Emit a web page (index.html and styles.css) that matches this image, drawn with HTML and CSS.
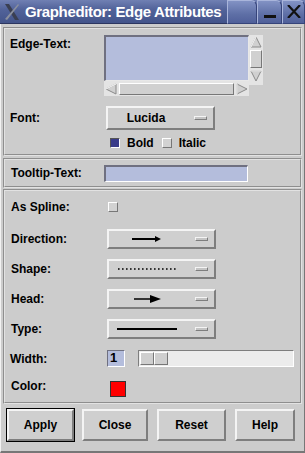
FILE: index.html
```html
<!DOCTYPE html>
<html>
<head>
<meta charset="utf-8">
<link rel="stylesheet" href="styles.css">
</head>
<body>
<div class="win">
  <div class="titlebar">
    <svg class="xlogo" width="18" height="18" viewBox="0 0 18 18">
      <path d="M2 1 L6 1 L16 17 L12 17 Z" fill="#3a3f52"/>
      <path d="M15 1 L16 2 L4 17 L2 16 Z" fill="#8a8f9e"/>
    </svg>
    <span class="title">Grapheditor: Edge Attributes</span>
    <div class="tbtns">
      <div class="tbtn wide"></div>
      <div class="tbtn"><span class="minbar"></span></div>
      <div class="tbtn">
        <svg width="14" height="13" viewBox="0 0 14 13"><path d="M1 0 L13 13 M13 0 L1 13" stroke="#111" stroke-width="2.2"/></svg>
      </div>
    </div>
  </div>
  <div class="body">
    <div class="frame f1">
      <div class="row top">
        <div class="lbl l1 tl">Edge-Text:</div>
        <div class="textbox">
          <div class="ta"></div>
          <div class="vscroll">
            <svg class="arr" width="12" height="12" viewBox="0 0 12 12"><path d="M6 1 L11 11 L1 11 Z" fill="#d0d0d0" stroke="#8a8a8a"/><path d="M6 1 L1 11" stroke="#fff"/></svg>
            <div class="vthumb"></div>
            <svg class="arr" width="12" height="12" viewBox="0 0 12 12"><path d="M6 11 L11 1 L1 1 Z" fill="#d0d0d0" stroke="#8a8a8a"/><path d="M1 1 L11 1" stroke="#fff"/></svg>
          </div>
          <div class="hscroll">
            <svg class="arr" width="12" height="12" viewBox="0 0 12 12"><path d="M1 6 L11 1 L11 11 Z" fill="#d0d0d0" stroke="#8a8a8a"/><path d="M1 6 L11 1" stroke="#fff"/></svg>
            <div class="hthumb"></div>
            <svg class="arr" width="12" height="12" viewBox="0 0 12 12"><path d="M11 6 L1 1 L1 11 Z" fill="#d0d0d0" stroke="#8a8a8a"/><path d="M1 1 L1 11" stroke="#fff"/></svg>
          </div>
        </div>
      </div>
      <div class="row font-row">
        <div class="lbl l1">Font:</div>
        <div class="opt tall"><span class="val">Lucida</span><span class="ind"></span></div>
      </div>
      <div class="row checks">
        <span class="cb on"></span><span class="cbl">Bold</span>
        <span class="cb"></span><span class="cbl">Italic</span>
      </div>
    </div>

    <div class="frame f2">
      <div class="row center">
        <div class="lbl l2">Tooltip-Text:</div>
        <div class="tip"></div>
      </div>
    </div>

    <div class="frame f3">
      <div class="row spline">
        <div class="lbl l3">As Spline:</div>
        <span class="cb spl"></span>
      </div>
      <div class="row r3">
        <div class="lbl l3">Direction:</div>
        <div class="opt"><span class="val">
          <svg width="30" height="8" viewBox="0 0 30 8"><path d="M0 4 L25 4" stroke="#000" stroke-width="2"/><path d="M23 1 L29 4 L23 7 Z" fill="#000"/></svg>
        </span><span class="ind"></span></div>
      </div>
      <div class="row r3">
        <div class="lbl l3">Shape:</div>
        <div class="opt"><span class="val">
          <svg width="58" height="4" viewBox="0 0 58 4"><path d="M0 2 L58 2" stroke="#000" stroke-width="1.6" stroke-dasharray="1.6 2.4"/></svg>
        </span><span class="ind"></span></div>
      </div>
      <div class="row r3">
        <div class="lbl l3">Head:</div>
        <div class="opt"><span class="val">
          <svg width="27" height="10" viewBox="0 0 27 10"><path d="M0 5 L18 5" stroke="#000" stroke-width="1.5"/><path d="M16 1 L27 5 L16 9 Z" fill="#000"/></svg>
        </span><span class="ind"></span></div>
      </div>
      <div class="row r3">
        <div class="lbl l3">Type:</div>
        <div class="opt"><span class="val">
          <svg width="60" height="4" viewBox="0 0 60 4"><path d="M0 2 L60 2" stroke="#000" stroke-width="2"/></svg>
        </span><span class="ind"></span></div>
      </div>
      <div class="row wrow">
        <div class="lbl l3 lw">Width:</div>
        <div class="num">1</div>
        <div class="slider"><div class="sthumb"></div><div class="sthumb"></div></div>
      </div>
      <div class="row crow">
        <div class="lbl l3 lc">Color:</div>
        <div class="swatch"></div>
      </div>
    </div>

    <div class="buttons">
      <div class="defbtn"><div class="btn b-apply">Apply</div></div>
      <div class="btn b-close">Close</div>
      <div class="btn b-reset">Reset</div>
      <div class="btn b-help">Help</div>
    </div>
  </div>
</div>
</body>
</html>
```

FILE: styles.css
```css
* { box-sizing: border-box; }
html, body { margin: 0; padding: 0; }
body {
  width: 305px;
  height: 453px;
  overflow: hidden;
  font-family: "Liberation Sans", Arial, sans-serif;
  font-weight: bold;
  font-size: 12px;
  color: #000;
  background: #cccccc;
}
.win { width: 305px; height: 453px; display: flex; flex-direction: column; }

.titlebar {
  height: 24px;
  flex: none;
  display: flex;
  align-items: center;
  background: linear-gradient(#7080b3 0%, #52639a 40%, #43548a 100%);
  border-bottom: 1px solid #2c3660;
}
.xlogo { margin-left: 3px; flex: none; }
.title {
  color: #fff;
  font-size: 15px;
  font-weight: bold;
  margin-left: 4px;
  white-space: nowrap;
  flex: 1;
  min-width: 0;
  letter-spacing: -0.35px;
}
.tbtns { display: flex; height: 24px; flex: none; }
.tbtn {
  width: 25px;
  height: 24px;
  background: linear-gradient(#8292c4, #5e6fa6 60%, #50609a);
  border: 1px solid #a9b5db;
  border-right-color: #36447a;
  border-bottom-color: #36447a;
  border-radius: 0 6px 0 0;
  display: flex;
  align-items: center;
  justify-content: center;
}
.tbtn.wide { width: 30px; }
.tbtn:last-child { width: 23px; }
.minbar { width: 12px; height: 3px; background: #111; margin-top: 10px; }

.body {
  flex: 1;
  padding: 3px 3px 0 3px;
  border-left: 1px solid #f2f2f2;
  border-right: 1px solid #777;
  border-bottom: 2px solid #777;
  display: flex;
  flex-direction: column;
}

.frame {
  border: 2px groove #e2e2e2;
  display: flex;
  flex-direction: column;
  width: 299px;
  margin-left: -1px;
}
.f1 { height: 129px; padding-top: 6px; }
.f2 { height: 30px; margin-top: 2px; justify-content: center; }
.f3 { height: 215px; margin-top: 1px; padding-top: 7px; }

.row { display: flex; align-items: center; }
.row.top { align-items: flex-start; }
.lbl { flex: none; white-space: nowrap; }
.l1 { width: 99px; padding-left: 5px; }
.l2 { width: 100px; padding-left: 6px; }
.l3 { width: 102px; padding-left: 6px; }
.tl { margin-top: 2px; line-height: 14px; }

.textbox {
  display: grid;
  grid-template-columns: 145px 14px;
  grid-template-rows: 46px 15px;
}
.ta {
  grid-column: 1;
  grid-row: 1;
  background: #b4bddc;
  border: 1px solid #6f7080;
  border-right-color: #e8e8e8;
  border-bottom-color: #e8e8e8;
  border-top-width: 2px;
  border-left-width: 2px;
}
.vscroll {
  grid-column: 2;
  grid-row: 1 / span 2;
  height: 50px;
  background: #e4e4e4;
  display: flex;
  flex-direction: column;
  align-items: center;
  padding-top: 1px;
}
.vthumb {
  width: 12px;
  height: 18px;
  margin: 2px 0;
  border: 1px solid;
  border-color: #fff #777 #777 #fff;
  background: #d0d0d0;
}
.hscroll {
  grid-column: 1;
  grid-row: 2;
  background: #e4e4e4;
  display: flex;
  align-items: center;
  padding: 0 1px;
  gap: 2px;
}
.hthumb {
  flex: 1;
  height: 12px;
  border: 1px solid;
  border-color: #fff #777 #777 #fff;
  background: #d0d0d0;
}
.arr { flex: none; display: block; }

.font-row { margin-top: 10px; }
.opt {
  width: 109px;
  height: 20px;
  margin-left: 5px;
  display: flex;
  align-items: center;
  border: 2px solid;
  border-color: #f4f4f4 #7e7e7e #7e7e7e #f4f4f4;
  background: #cfcfcf;
}
.l1 + .opt { margin-left: 2px; }
.opt.tall { height: 24px; }
.val {
  flex: 1;
  display: flex;
  justify-content: center;
  align-items: center;
  font-size: 12px;
}
.val svg { display: block; }
.ind {
  flex: none;
  width: 13px;
  height: 4px;
  margin: 0 6px 0 10px;
  border: 1px solid;
  border-color: #f4f4f4 #7e7e7e #7e7e7e #f4f4f4;
  background: #c4c4c4;
}

.checks { margin-top: 6px; padding-left: 100px; height: 14px; }
.cb {
  width: 10px;
  height: 10px;
  flex: none;
  margin-left: 5px;
  border: 1px solid;
  border-color: #fff #777 #777 #fff;
  background: #d2d2d2;
}
.cb.on {
  background: #3a3c8a;
  border-color: #555 #fff #fff #555;
}
.cbl { margin-left: 7px; }
.cbl + .cb { margin-left: 8px; }
.cb.spl { margin-left: 1px; }

.tip {
  width: 144px;
  height: 17px;
  margin-left: -1px;
  background: #b4bddc;
  border: 1px solid;
  border-color: #6f7080 #fff #fff #6f7080;
  border-top-width: 2px;
  border-left-width: 2px;
}

.spline { height: 18px; }
.r3 { margin-top: 10px; }
.spline + .r3 { margin-top: 13px; }
.r3 .opt { margin-left: 0; }

.wrow { margin-top: 11px; height: 17px; }
.lw { padding-left: 5px; }
.num {
  width: 18px;
  height: 17px;
  background: #b4bddc;
  border: 1px solid;
  border-color: #6f7080 #fff #fff #6f7080;
  padding-left: 2px;
  font-size: 13px;
  line-height: 14px;
}
.slider {
  width: 156px;
  height: 17px;
  margin-left: 13px;
  background: #ececec;
  border: 1px solid;
  border-color: #7e7e7e #fff #fff #7e7e7e;
  display: flex;
  padding: 1px;
}
.sthumb {
  width: 14px;
  height: 13px;
  border: 1px solid;
  border-color: #fff #777 #777 #fff;
  background: #cfcfcf;
}
.crow { margin-top: 14px; align-items: flex-start; }
.lc { margin-top: -2px; line-height: 14px; }
.swatch {
  width: 16px;
  height: 16px;
  margin-left: 3px;
  background: #ff0000;
  border: 1px solid #333;
}

.buttons {
  display: flex;
  align-items: center;
  margin-top: 4px;
  height: 34px;
  padding-left: 3px;
  margin-left: -1px;
}
.btn {
  height: 32px;
  display: flex;
  align-items: center;
  justify-content: center;
  border: 2px solid;
  border-color: #f4f4f4 #7e7e7e #7e7e7e #f4f4f4;
  background: #cfcfcf;
  font-size: 12px;
}
.defbtn {
  border: 1px solid #000;
  padding: 0;
  height: 34px;
  display: flex;
  align-items: center;
}
.b-apply { width: 67px; }
.b-close { width: 66px; margin-left: 7px; }
.b-reset { width: 69px; margin-left: 9px; }
.b-help { width: 60px; margin-left: 9px; }
```
